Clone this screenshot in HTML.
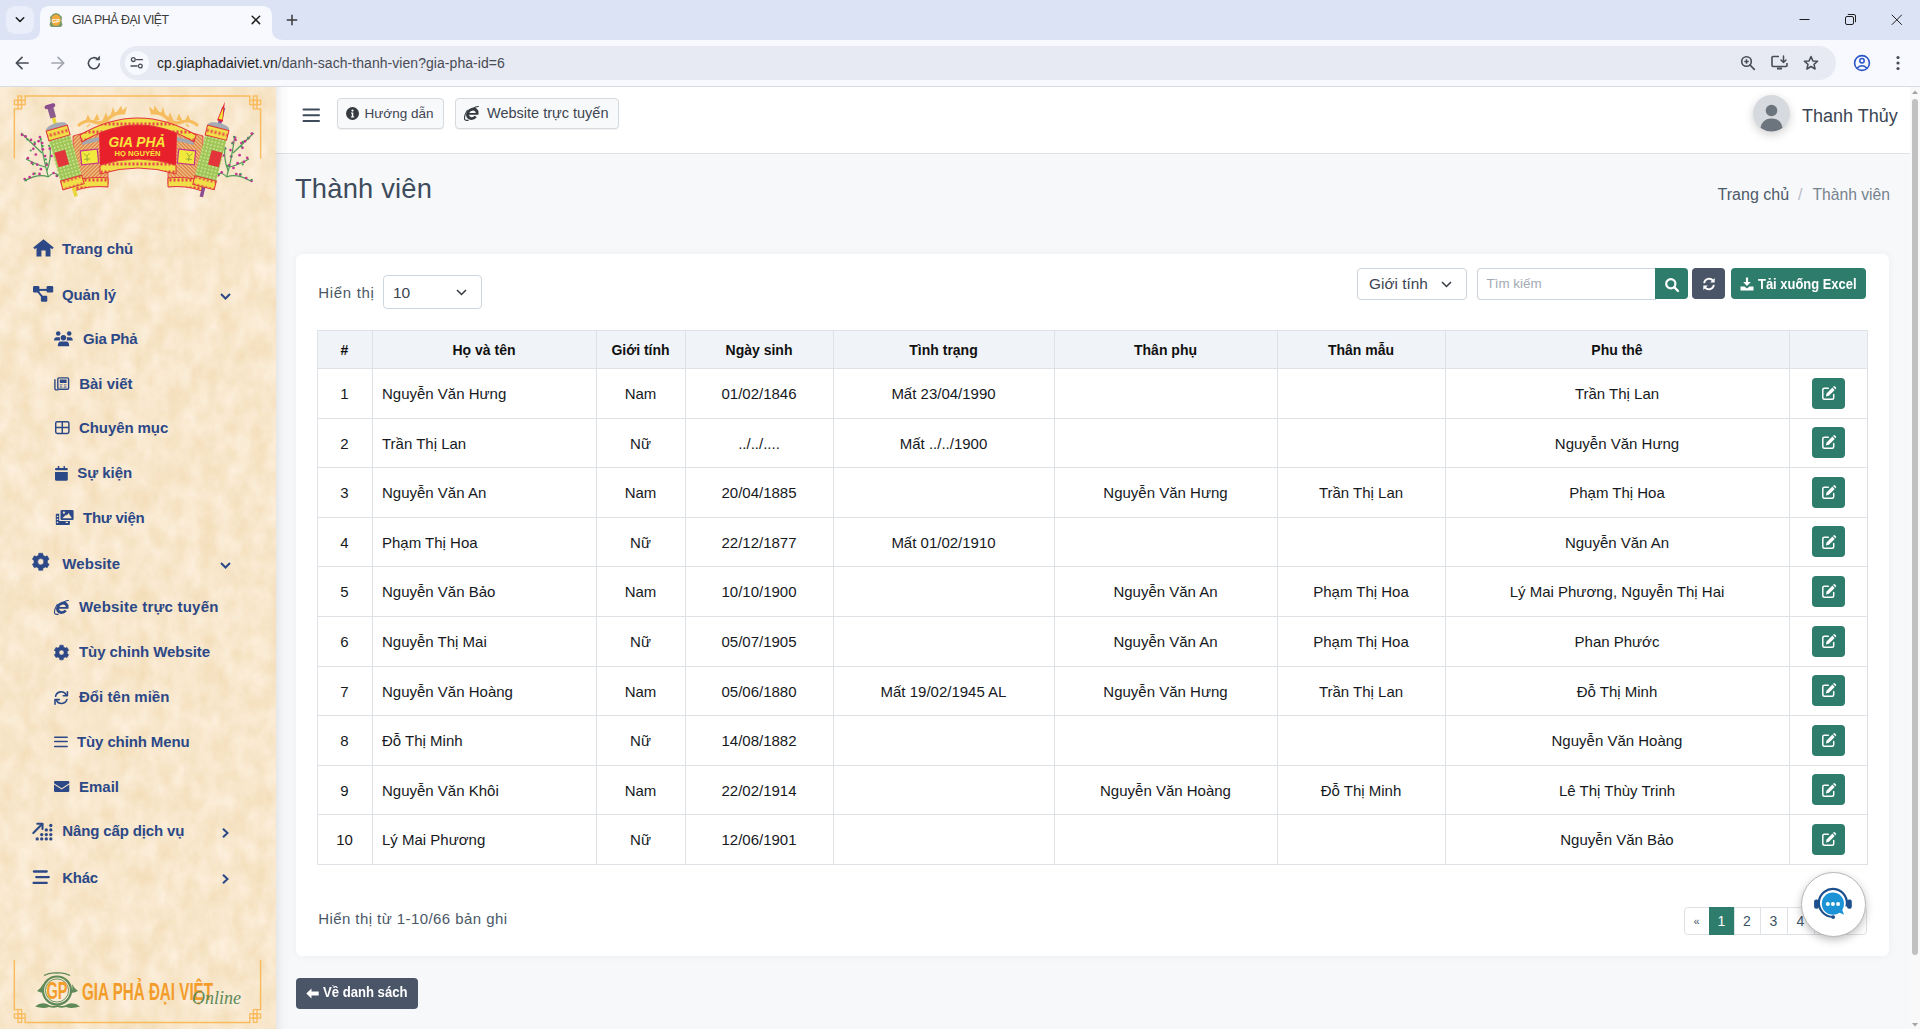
<!DOCTYPE html>
<html><head><meta charset="utf-8"><title>GIA PHẢ ĐẠI VIỆT</title>
<style>
*{box-sizing:border-box;margin:0;padding:0}
html,body{width:1920px;height:1029px;overflow:hidden;font-family:"Liberation Sans",sans-serif;background:#f7f8fa;position:relative}
.t{position:absolute;line-height:1;white-space:nowrap}
.a{position:absolute}
svg{position:absolute;overflow:visible}
#tabbar{position:absolute;left:0;top:0;width:1920px;height:40px;background:#dbe3f5}
#toolbar{position:absolute;left:0;top:40px;width:1920px;height:46px;background:#f8f9fe}
#tbline{position:absolute;left:0;top:86px;width:1920px;height:1px;background:#d7dbe6}

.cell{position:absolute;text-align:center;white-space:nowrap;font-size:15px;color:#16191d}
.hd{font-weight:bold;font-size:14px;color:#111}
</style></head>
<body>
<div id="tabbar"></div>
<div class="a" style="left:6px;top:6px;width:28px;height:28px;border-radius:9px;background:#e9eefa"></div>
<svg style="left:0;top:0" width="40" height="40"><path d="M16.3 17.8 L20 21.5 L23.7 17.8" fill="none" stroke="#1f1f1f" stroke-width="1.6" stroke-linecap="round" stroke-linejoin="round"/></svg>
<svg style="left:28px;top:0" width="256" height="41"><path d="M0 40 Q12 40 12 30 L12 16 Q12 6 22 6 L234 6 Q244 6 244 16 L244 30 Q244 40 256 40 Z" fill="#f8f9fe"/></svg>
<svg style="left:48px;top:12px" width="16" height="16"><path d="M3 15 L1.5 13 L2.5 9 L2 5 L5 2 L8 1 L11 2 L14 5 L13.5 9 L14.5 13 L13 15 Z" fill="#7d9a6b"/><ellipse cx="8" cy="8.2" rx="4.6" ry="5.6" fill="#f4a93a"/><text x="8" y="10.5" font-size="5.5" font-family="Liberation Sans" fill="#fff" text-anchor="middle" font-weight="bold">GP</text></svg>
<div class="t " style="left:72px;top:14.39px;font-size:12.3px;color:#3a3a3a;letter-spacing:-0.45px">GIA PHẢ ĐẠI VIỆT</div>
<svg style="left:250px;top:14px" width="12" height="12"><path d="M2.2 2.2 L9.6 9.6 M9.6 2.2 L2.2 9.6" stroke="#1f1f1f" stroke-width="1.5" stroke-linecap="round"/></svg>
<svg style="left:286px;top:14px" width="12" height="12"><path d="M6 1.3 V10.7 M1.3 6 H10.7" stroke="#3a3a3a" stroke-width="1.5" stroke-linecap="round"/></svg>
<svg style="left:1799px;top:14px" width="12" height="12"><path d="M0.5 5.5 H10.5" stroke="#1f1f1f" stroke-width="1"/></svg>
<svg style="left:1845px;top:14px" width="12" height="12"><rect x="0.5" y="2.5" width="8" height="8" rx="1.5" fill="none" stroke="#1f1f1f" stroke-width="1"/><path d="M2.8 0.5 H9 Q10.5 0.5 10.5 2 V8.2" fill="none" stroke="#1f1f1f" stroke-width="1"/></svg>
<svg style="left:1891px;top:14px" width="12" height="12"><path d="M0.8 0.8 L10.8 10.8 M10.8 0.8 L0.8 10.8" stroke="#1f1f1f" stroke-width="1"/></svg>
<div id="toolbar"></div><div id="tbline"></div>
<svg style="left:14px;top:55px" width="16" height="16"><path d="M14 8 H2.5 M8 2.3 L2.3 8 L8 13.7" fill="none" stroke="#474c55" stroke-width="1.7" stroke-linecap="round" stroke-linejoin="round"/></svg>
<svg style="left:50px;top:55px" width="16" height="16"><path d="M2 8 H13.5 M8 2.3 L13.7 8 L8 13.7" fill="none" stroke="#a3a6ad" stroke-width="1.7" stroke-linecap="round" stroke-linejoin="round"/></svg>
<svg style="left:86px;top:55px" width="16" height="16"><path d="M13.4 8.3 A5.5 5.5 0 1 1 11.9 4.4" fill="none" stroke="#474c55" stroke-width="1.6"/><path d="M9.2 5.3 L13.9 5.3 L13.9 0.6 Z" fill="#474c55"/></svg>
<div class="a" style="left:120px;top:46px;width:1716px;height:34px;border-radius:17px;background:#e7eaf3"></div>
<div class="a" style="left:125px;top:51px;width:24px;height:24px;border-radius:12px;background:#f8f9fe"></div>
<svg style="left:130px;top:56px" width="14" height="14"><circle cx="3.3" cy="3.6" r="1.9" fill="none" stroke="#474c55" stroke-width="1.3"/><path d="M6.5 3.6 H12.5 M1 10 H7" stroke="#474c55" stroke-width="1.3" stroke-linecap="round"/><circle cx="10.3" cy="10" r="1.9" fill="none" stroke="#474c55" stroke-width="1.3"/></svg>
<div class="t " style="left:157px;top:55.65px;font-size:14px;letter-spacing:0.05px"><span style="color:#1f1f1f">cp.giaphadaiviet.vn</span><span style="color:#474c55">/danh-sach-thanh-vien?gia-pha-id=6</span></div>
<svg style="left:1740px;top:55px" width="16" height="16"><circle cx="6.5" cy="6.5" r="4.8" fill="none" stroke="#474c55" stroke-width="1.6"/><path d="M4.3 6.5 H8.7 M6.5 4.3 V8.7" stroke="#474c55" stroke-width="1.5"/><path d="M10 10 L14.3 14.3" stroke="#474c55" stroke-width="1.7" stroke-linecap="round"/></svg>
<svg style="left:1771px;top:55px" width="18" height="16"><path d="M8 1.5 H2 Q1 1.5 1 2.5 V10.5 Q1 11.5 2 11.5 H15 Q16 11.5 16 10.5 V8" fill="none" stroke="#474c55" stroke-width="1.6"/><path d="M12.5 1 V7.5 M10 5 L12.5 7.5 L15 5" fill="none" stroke="#474c55" stroke-width="1.5" stroke-linecap="round" stroke-linejoin="round"/><rect x="6" y="12.5" width="5" height="2" fill="#474c55"/></svg>
<svg style="left:1803px;top:55px" width="16" height="16"><path d="M8 1.5 L9.9 5.9 L14.6 6.3 L11 9.4 L12.1 14 L8 11.5 L3.9 14 L5 9.4 L1.4 6.3 L6.1 5.9 Z" fill="none" stroke="#474c55" stroke-width="1.5" stroke-linejoin="round"/></svg>
<svg style="left:1853px;top:54px" width="18" height="18"><circle cx="9" cy="9" r="7.4" fill="none" stroke="#2a55c9" stroke-width="1.6"/><circle cx="9" cy="6.8" r="2.2" fill="none" stroke="#2a55c9" stroke-width="1.5"/><path d="M4.2 14 Q9 9.6 13.8 14" fill="none" stroke="#2a55c9" stroke-width="1.5"/></svg>
<svg style="left:1894px;top:55px" width="8" height="16"><circle cx="4" cy="2.5" r="1.6" fill="#474c55"/><circle cx="4" cy="8" r="1.6" fill="#474c55"/><circle cx="4" cy="13.5" r="1.6" fill="#474c55"/></svg>
<svg style="left:0;top:87px" width="276" height="942"><defs><filter id="pn" x="0" y="0" width="100%" height="100%" color-interpolation-filters="sRGB"><feTurbulence type="fractalNoise" baseFrequency="0.06 0.04" numOctaves="5" seed="11"/><feColorMatrix type="matrix" values="0 0 0 0 1  0 0 0 0 0.962  0 0 0 0 0.915  0.8 0 0 0 0.1"/></filter></defs><rect width="276" height="942" fill="#f1d8ad"/><rect width="276" height="942" filter="url(#pn)"/></svg>
<div class="a" style="left:0;top:87px;width:276px;height:942px">
<svg style="left:0;top:0" width="276" height="210"><path d="M24.5 9 H250.5 M14.35 21.25 V71.5 M260.6 21.25 V71.5" stroke="#f9bb5c" stroke-width="1.45"/><g transform="translate(19.75 15.45) scale(1 1)" fill="none" stroke="#f9bb5c" stroke-width="1.3"><rect x="-1.8" y="-6.45" width="3.6" height="4.3"/><rect x="-5.4" y="-2.15" width="3.6" height="4.3"/><rect x="-1.8" y="-2.15" width="3.6" height="4.3"/><rect x="1.8" y="-2.15" width="3.6" height="4.3"/><rect x="-1.8" y="2.15" width="3.6" height="4.3"/><path d="M5.4 -2.15 V-6.45 M-1.8 6.45 H-5.4"/></g><g transform="translate(255.2 15.45) scale(-1 1)" fill="none" stroke="#f9bb5c" stroke-width="1.3"><rect x="-1.8" y="-6.45" width="3.6" height="4.3"/><rect x="-5.4" y="-2.15" width="3.6" height="4.3"/><rect x="-1.8" y="-2.15" width="3.6" height="4.3"/><rect x="1.8" y="-2.15" width="3.6" height="4.3"/><rect x="-1.8" y="2.15" width="3.6" height="4.3"/><path d="M5.4 -2.15 V-6.45 M-1.8 6.45 H-5.4"/></g><path d="M48.4 90 Q43.6 74 40.4 50" fill="none" stroke="#4e9b55" stroke-width="1.2"/><path d="M48.4 90 Q38.8 86 24.4 94" fill="none" stroke="#4e9b55" stroke-width="1.2"/><path d="M42.0 66 Q35.6 60 21.2 46" fill="none" stroke="#4e9b55" stroke-width="1.2"/><path d="M45.2 80 Q37.2 78 26.0 72" fill="none" stroke="#4e9b55" stroke-width="1.2"/><path d="M48.4 90 Q53.2 84 58.0 88" fill="none" stroke="#4e9b55" stroke-width="1.2"/><path d="M46.8 84 Q51.6 72 50.0 60" fill="none" stroke="#4e9b55" stroke-width="1.2"/><circle cx="39.9" cy="50.1" r="1.35" fill="#c2368f"/><circle cx="38.6" cy="54.2" r="1.35" fill="#c2368f"/><circle cx="42.2" cy="56.0" r="1.35" fill="#c2368f"/><circle cx="21.9" cy="47.8" r="1.35" fill="#c2368f"/><circle cx="25.5" cy="49.4" r="1.35" fill="#c2368f"/><circle cx="31.0" cy="52.9" r="1.35" fill="#c2368f"/><circle cx="34.6" cy="56.9" r="1.35" fill="#c2368f"/><circle cx="27.9" cy="71.2" r="1.35" fill="#c2368f"/><circle cx="31.9" cy="75.9" r="1.35" fill="#c2368f"/><circle cx="37.2" cy="77.6" r="1.35" fill="#c2368f"/><circle cx="24.7" cy="92.0" r="1.35" fill="#c2368f"/><circle cx="29.7" cy="90.2" r="1.35" fill="#c2368f"/><circle cx="33.6" cy="86.9" r="1.35" fill="#c2368f"/><circle cx="39.5" cy="86.9" r="1.35" fill="#c2368f"/><circle cx="56.8" cy="88.9" r="1.35" fill="#c2368f"/><circle cx="53.6" cy="86.0" r="1.35" fill="#c2368f"/><circle cx="49.8" cy="61.7" r="1.35" fill="#c2368f"/><circle cx="51.5" cy="69.0" r="1.35" fill="#c2368f"/><circle cx="45.1" cy="69.0" r="1.35" fill="#c2368f"/><circle cx="42.9" cy="62.3" r="1.35" fill="#c2368f"/><circle cx="33.3" cy="61.8" r="1.35" fill="#c2368f"/><circle cx="35.8" cy="67.5" r="1.35" fill="#c2368f"/><circle cx="46.8" cy="77.7" r="1.35" fill="#c2368f"/><circle cx="40.9" cy="82.2" r="1.35" fill="#c2368f"/><circle cx="40.7" cy="52.0" r="1.1" fill="#3f9b55"/><circle cx="42.7" cy="59.1" r="1.1" fill="#3f9b55"/><circle cx="27.4" cy="52.5" r="1.1" fill="#3f9b55"/><circle cx="34.7" cy="55.3" r="1.1" fill="#3f9b55"/><circle cx="33.0" cy="77.3" r="1.1" fill="#3f9b55"/><circle cx="26.0" cy="93.3" r="1.1" fill="#3f9b55"/><circle cx="34.9" cy="86.6" r="1.1" fill="#3f9b55"/><circle cx="57.7" cy="88.4" r="1.1" fill="#3f9b55"/><circle cx="49.1" cy="58.8" r="1.1" fill="#3f9b55"/><circle cx="45.8" cy="72.4" r="1.1" fill="#3f9b55"/><circle cx="30.8" cy="63.5" r="1.1" fill="#3f9b55"/><circle cx="46.4" cy="76.3" r="1.1" fill="#3f9b55"/><path d="M226.6 90 Q231.4 74 234.6 50" fill="none" stroke="#4e9b55" stroke-width="1.2"/><path d="M226.6 90 Q236.2 86 250.6 94" fill="none" stroke="#4e9b55" stroke-width="1.2"/><path d="M233.0 66 Q239.4 60 253.8 46" fill="none" stroke="#4e9b55" stroke-width="1.2"/><path d="M229.8 80 Q237.8 78 249.0 72" fill="none" stroke="#4e9b55" stroke-width="1.2"/><path d="M226.6 90 Q221.8 84 217.0 88" fill="none" stroke="#4e9b55" stroke-width="1.2"/><path d="M228.2 84 Q223.4 72 225.0 60" fill="none" stroke="#4e9b55" stroke-width="1.2"/><circle cx="235.0" cy="50.6" r="1.35" fill="#c2368f"/><circle cx="235.5" cy="52.9" r="1.35" fill="#c2368f"/><circle cx="232.8" cy="55.9" r="1.35" fill="#c2368f"/><circle cx="251.8" cy="46.6" r="1.35" fill="#c2368f"/><circle cx="248.3" cy="51.2" r="1.35" fill="#c2368f"/><circle cx="245.0" cy="54.2" r="1.35" fill="#c2368f"/><circle cx="241.4" cy="56.0" r="1.35" fill="#c2368f"/><circle cx="247.2" cy="70.9" r="1.35" fill="#c2368f"/><circle cx="244.0" cy="74.8" r="1.35" fill="#c2368f"/><circle cx="237.6" cy="76.2" r="1.35" fill="#c2368f"/><circle cx="251.5" cy="93.9" r="1.35" fill="#c2368f"/><circle cx="246.2" cy="91.1" r="1.35" fill="#c2368f"/><circle cx="240.2" cy="87.7" r="1.35" fill="#c2368f"/><circle cx="236.3" cy="87.0" r="1.35" fill="#c2368f"/><circle cx="218.3" cy="88.2" r="1.35" fill="#c2368f"/><circle cx="221.7" cy="85.3" r="1.35" fill="#c2368f"/><circle cx="224.2" cy="61.0" r="1.35" fill="#c2368f"/><circle cx="223.5" cy="68.5" r="1.35" fill="#c2368f"/><circle cx="231.1" cy="69.5" r="1.35" fill="#c2368f"/><circle cx="230.5" cy="63.1" r="1.35" fill="#c2368f"/><circle cx="242.5" cy="60.8" r="1.35" fill="#c2368f"/><circle cx="239.6" cy="68.2" r="1.35" fill="#c2368f"/><circle cx="229.1" cy="78.3" r="1.35" fill="#c2368f"/><circle cx="233.5" cy="80.9" r="1.35" fill="#c2368f"/><circle cx="234.1" cy="49.8" r="1.1" fill="#3f9b55"/><circle cx="232.3" cy="56.3" r="1.1" fill="#3f9b55"/><circle cx="248.2" cy="51.2" r="1.1" fill="#3f9b55"/><circle cx="242.9" cy="54.8" r="1.1" fill="#3f9b55"/><circle cx="242.7" cy="77.3" r="1.1" fill="#3f9b55"/><circle cx="251.6" cy="92.8" r="1.1" fill="#3f9b55"/><circle cx="240.6" cy="87.1" r="1.1" fill="#3f9b55"/><circle cx="219.1" cy="87.1" r="1.1" fill="#3f9b55"/><circle cx="225.5" cy="61.5" r="1.1" fill="#3f9b55"/><circle cx="231.4" cy="69.4" r="1.1" fill="#3f9b55"/><circle cx="241.5" cy="59.6" r="1.1" fill="#3f9b55"/><circle cx="227.9" cy="79.2" r="1.1" fill="#3f9b55"/><defs><pattern id="hatch" width="2.6" height="2.6" patternUnits="userSpaceOnUse" patternTransform="rotate(45)"><rect width="2.6" height="2.6" fill="#f0c48e"/><rect width="1.3" height="2.6" fill="#dc7d3a"/></pattern><pattern id="band" width="4" height="8" patternUnits="userSpaceOnUse"><rect width="4" height="8" fill="#f1df48"/><rect x="0.5" y="2.5" width="2" height="3" fill="#e5454a"/></pattern><pattern id="greenp" width="3.5" height="3.5" patternUnits="userSpaceOnUse"><rect width="3.5" height="3.5" fill="#9fc655"/><circle cx="1.75" cy="1.75" r="0.9" fill="#d6e6a6"/></pattern></defs><g transform="translate(0,-87)" opacity="0.8"><path d="M79 125 Q86 119 94 122 Q102 125 109 118 Q115 112 124 113" fill="none" stroke="#f6b445" stroke-width="3.2" stroke-linecap="round"/><path d="M86 121 l2 -5 l2 4 M94 121 l3 -6 l2 5 M103 121 l3 -7 l2 6 M111 116 l2 -7 l2 6 M117 113 l4 -6 l1 5 M121 112 l5 -4 l-1 4" fill="#f6b445" stroke="#f6b445" stroke-width="1.2"/><path d="M90 124 l-3 3 M100 124 l-2 4 M108 121 l1 4" stroke="#f6b445" stroke-width="1.4"/></g><g transform="translate(276,-87) scale(-1 1)" opacity="0.8"><path d="M79 125 Q86 119 94 122 Q102 125 109 118 Q115 112 124 113" fill="none" stroke="#f6b445" stroke-width="3.2" stroke-linecap="round"/><path d="M86 121 l2 -5 l2 4 M94 121 l3 -6 l2 5 M103 121 l3 -7 l2 6 M111 116 l2 -7 l2 6 M117 113 l4 -6 l1 5 M121 112 l5 -4 l-1 4" fill="#f6b445" stroke="#f6b445" stroke-width="1.2"/><path d="M90 124 l-3 3 M100 124 l-2 4 M108 121 l1 4" stroke="#f6b445" stroke-width="1.4"/></g><g transform="translate(0,-87)"><g><path d="M73 136 Q90 130 108 132 L108 184 Q90 182 74 188 Z" fill="url(#hatch)" stroke="#e2343a" stroke-width="0.8"/><path d="M73 181 Q90 176 108 178 L108 187 Q90 185 74 191 Z" fill="url(#band)" stroke="#e2343a" stroke-width="1"/><path d="M82 141 L99 137 L99 141 L82 145 Z" fill="#a3a7ae"/><rect x="81" y="150" width="17" height="14" fill="#f3e83c" stroke="#c2338f" stroke-width="1.2" transform="rotate(-6 89 157)"/><path d="M84 153 l3 3 l3 -3 m-3 3 v5 m-3 -2 h6" stroke="#8aa23a" stroke-width="0.8" fill="none" transform="rotate(-6 89 157)"/></g><g transform="translate(276 0) scale(-1 1)"><path d="M73 136 Q90 130 108 132 L108 184 Q90 182 74 188 Z" fill="url(#hatch)" stroke="#e2343a" stroke-width="0.8"/><path d="M73 181 Q90 176 108 178 L108 187 Q90 185 74 191 Z" fill="url(#band)" stroke="#e2343a" stroke-width="1"/><path d="M82 141 L99 137 L99 141 L82 145 Z" fill="#a3a7ae"/><rect x="81" y="150" width="17" height="14" fill="#f3e83c" stroke="#c2338f" stroke-width="1.2" transform="rotate(-6 89 157)"/><path d="M84 153 l3 3 l3 -3 m-3 3 v5 m-3 -2 h6" stroke="#8aa23a" stroke-width="0.8" fill="none" transform="rotate(-6 89 157)"/></g><path d="M99 132 Q138 106 177 132 L176 166 Q138 154 100 166 Z" fill="#e8202c"/><path d="M80 135 Q138 101 196 135 L194 142 Q138 108 82 142 Z" fill="url(#band)" stroke="#e2343a" stroke-width="1.1"/><path d="M100 165 Q138 153 176 165 L176 174 Q138 162 100 174 Z" fill="url(#band)" stroke="#e2343a" stroke-width="1"/><text x="108.5" y="146.5" font-family="Liberation Sans" font-weight="bold" font-size="15" fill="#f8e53a" font-style="italic" textLength="57" lengthAdjust="spacingAndGlyphs">GIA PHẢ</text><text x="114.5" y="156" font-family="Liberation Sans" font-weight="bold" font-size="8" fill="#f8e53a" textLength="46" lengthAdjust="spacingAndGlyphs">HỌ NGUYỄN</text><g transform="rotate(-16 65 157)"><rect x="63" y="106" width="3.5" height="92" fill="#e8d63a"/><rect x="61.5" y="104" width="6" height="12" fill="#8c5c8f"/><rect x="59" y="102" width="11" height="4" rx="2" fill="#8c4c90"/><rect x="54" y="126" width="22" height="62" rx="3" fill="url(#greenp)"/><ellipse cx="65" cy="126" rx="11" ry="4" fill="#a6abb3"/><rect x="54" y="127" width="22" height="10" fill="url(#band)" stroke="#e2343a" stroke-width="1"/><rect x="54" y="179" width="22" height="9" fill="url(#band)" stroke="#e2343a" stroke-width="1"/><rect x="56" y="150" width="11" height="15" fill="#e2343a"/></g><g transform="rotate(14 211 157)"><rect x="209.5" y="106" width="3.5" height="92" fill="#8c4c90"/><path d="M208 120 L211 100 L214 120 Z" fill="#e8202c"/><path d="M209 118 L211 106 L213 118 Z" fill="#f2e63a"/><rect x="200" y="126" width="22" height="62" rx="3" fill="url(#greenp)"/><ellipse cx="211" cy="126" rx="11" ry="4" fill="#a6abb3"/><rect x="200" y="127" width="22" height="10" fill="url(#band)" stroke="#e2343a" stroke-width="1"/><rect x="200" y="179" width="22" height="9" fill="url(#band)" stroke="#e2343a" stroke-width="1"/><rect x="210" y="150" width="11" height="15" fill="#e2343a"/></g></g></svg>
<svg style="left:0;top:860px" width="276" height="82"><path d="M14.35 13 V63.2 M260.6 13 V63.2 M24.5 75.45 H250.5" stroke="#f9bb5c" stroke-width="1.45"/><g transform="translate(19.75 69) scale(1 -1)" fill="none" stroke="#f9bb5c" stroke-width="1.3"><rect x="-1.8" y="-6.45" width="3.6" height="4.3"/><rect x="-5.4" y="-2.15" width="3.6" height="4.3"/><rect x="-1.8" y="-2.15" width="3.6" height="4.3"/><rect x="1.8" y="-2.15" width="3.6" height="4.3"/><rect x="-1.8" y="2.15" width="3.6" height="4.3"/><path d="M5.4 -2.15 V-6.45 M-1.8 6.45 H-5.4"/></g><g transform="translate(255.2 69) scale(-1 -1)" fill="none" stroke="#f9bb5c" stroke-width="1.3"><rect x="-1.8" y="-6.45" width="3.6" height="4.3"/><rect x="-5.4" y="-2.15" width="3.6" height="4.3"/><rect x="-1.8" y="-2.15" width="3.6" height="4.3"/><rect x="1.8" y="-2.15" width="3.6" height="4.3"/><rect x="-1.8" y="2.15" width="3.6" height="4.3"/><path d="M5.4 -2.15 V-6.45 M-1.8 6.45 H-5.4"/></g><path d="M35 59.5 Q41 54.5 47 57 Q52 60.5 57.5 58 Q63 60.5 68 57 Q74 54.5 80 59.5 Q72 62 66 60 Q61.5 61.5 57.5 60 Q53.5 61.5 49 60 Q43 62 35 59.5 Z" fill="#5f8a58"/><path d="M37 44 Q41 41 43 37 Q42 43 44 46 Q41 46 37 44 Z M78 44 Q74 41 72 37 Q73 43 71 46 Q74 46 78 44 Z" fill="#5f8a58"/><path d="M44 28.5 Q50 25 57 26 Q64 25 70 28.5" fill="none" stroke="#5f8a58" stroke-width="1.3"/><circle cx="57" cy="43.5" r="14" fill="none" stroke="#5f8a58" stroke-width="2.2"/><circle cx="57" cy="43.5" r="11.6" fill="none" stroke="#5f8a58" stroke-width="0.9"/><text x="46.5" y="52.3" font-family="Liberation Sans" font-weight="bold" font-size="23" fill="#f39c2a" textLength="21" lengthAdjust="spacingAndGlyphs">GP</text><text x="82" y="53.3" font-family="Liberation Sans" font-weight="bold" font-size="24" fill="#f39c2a" textLength="131" lengthAdjust="spacingAndGlyphs">GIA PHẢ ĐẠI VIỆT</text><text x="192" y="57" font-family="Liberation Serif" font-style="italic" font-size="19" fill="#5e8a5a" textLength="49" lengthAdjust="spacingAndGlyphs">Online</text></svg>
</div>
<svg style="left:32.6px;top:239px" width="21" height="18" viewBox="0 0 21 18"><path d="M10.5 0.3 L20.7 8.6 L19.3 10.2 L17.5 8.8 V17.6 H12.6 V11.6 H8.4 V17.6 H3.5 V8.8 L1.7 10.2 L0.3 8.6 Z" fill="#2c4887"/></svg>
<div class="t " style="left:62px;top:240.80px;font-size:15px;font-weight:bold;color:#2c4887;letter-spacing:-0.061px">Trang chủ</div>
<svg style="left:32.5px;top:286.1px" width="21" height="17" viewBox="0 0 21 17"><rect x="0" y="0" width="6.4" height="6.6" rx="1.3" fill="#2c4887"/><rect x="13.6" y="0" width="6.6" height="6.6" rx="1.3" fill="#2c4887"/><rect x="7.9" y="9.7" width="6.4" height="6.1" rx="1.2" fill="#2c4887"/><path d="M5 3.9 H15" stroke="#2c4887" stroke-width="2"/><path d="M5 5.5 L9.2 10.8" stroke="#2c4887" stroke-width="1.9"/></svg>
<div class="t " style="left:62px;top:286.50px;font-size:15px;font-weight:bold;color:#2c4887;letter-spacing:-0.17px">Quản lý</div>
<svg style="left:54.4px;top:330.7px" width="19" height="16" viewBox="0 0 19 16"><circle cx="4.2" cy="2.4" r="2.25" fill="#2c4887"/><circle cx="15.2" cy="2.4" r="2.25" fill="#2c4887"/><circle cx="9.4" cy="6.8" r="2.75" fill="#2c4887"/><path d="M0 9.4 Q0.3 6.3 2.6 6.3 H5.5 Q5.9 6.3 6.1 6.6 Q5.6 7.9 6.1 9.4 Z" fill="#2c4887"/><path d="M18.8 9.4 Q18.5 6.3 16.2 6.3 H13.3 Q12.9 6.3 12.7 6.6 Q13.2 7.9 12.7 9.4 Z" fill="#2c4887"/><path d="M3.8 15.3 Q3.8 10.4 6.6 10.4 H12.3 Q15.2 10.4 15.2 15.3 Z" fill="#2c4887"/></svg>
<div class="t " style="left:83px;top:330.50px;font-size:15px;font-weight:bold;color:#2c4887;letter-spacing:-0.21px">Gia Phả</div>
<svg style="left:54.3px;top:376.7px" width="16" height="14" viewBox="0 0 16 14"><path d="M0.9 2.3 V11.4 Q0.9 12.9 2.4 12.9 H4.5" fill="none" stroke="#2c4887" stroke-width="1.4"/><rect x="3.8" y="0.9" width="10.8" height="11.4" rx="1.3" fill="none" stroke="#2c4887" stroke-width="1.4"/><rect x="5.8" y="2.6" width="6.8" height="3.4" rx="0.5" fill="#2c4887"/><rect x="5.6" y="7.4" width="2.9" height="0.9" rx="0.4" fill="#2c4887"/><rect x="9.7" y="7.4" width="2.9" height="0.9" rx="0.4" fill="#2c4887"/><rect x="5.6" y="9.5" width="2.9" height="1.1" rx="0.4" fill="#2c4887"/><rect x="9.7" y="9.5" width="2.9" height="1.1" rx="0.4" fill="#2c4887"/></svg>
<div class="t " style="left:79.2px;top:375.50px;font-size:15px;font-weight:bold;color:#2c4887;letter-spacing:-0.009px">Bài viết</div>
<svg style="left:54.8px;top:420.9px" width="15" height="14" viewBox="0 0 15 14"><rect x="0.7" y="0.7" width="13.2" height="11.7" rx="1.6" fill="none" stroke="#2c4887" stroke-width="1.45"/><path d="M7.3 0.7 V12.4 M0.7 6.5 H13.9" stroke="#2c4887" stroke-width="1.45"/></svg>
<div class="t " style="left:79px;top:419.50px;font-size:15px;font-weight:bold;color:#2c4887;letter-spacing:-0.08px">Chuyên mục</div>
<svg style="left:54.7px;top:466px" width="13" height="15" viewBox="0 0 13 15"><rect x="2.8" y="0" width="1.5" height="3" rx="0.6" fill="#2c4887"/><rect x="8.5" y="0" width="1.5" height="3" rx="0.6" fill="#2c4887"/><rect x="0" y="2.1" width="12.8" height="2.2" rx="1" fill="#2c4887"/><path d="M0 6 H12.8 V13.6 Q12.8 14.7 11.7 14.7 H1.1 Q0 14.7 0 13.6 Z" fill="#2c4887"/></svg>
<div class="t " style="left:77.2px;top:465.30px;font-size:15px;font-weight:bold;color:#2c4887;letter-spacing:-0.01px">Sự kiện</div>
<svg style="left:54.5px;top:509.9px" width="19" height="15" viewBox="0 0 19 15"><path d="M6.7 0 H17.4 Q18.6 0 18.6 1.2 V8.8 Q18.6 10 17.4 10 H6.7 Q5.5 10 5.5 8.8 V1.2 Q5.5 0 6.7 0 Z M8.9 1.6 A1.1 1.1 0 1 0 8.9 3.8 A1.1 1.1 0 1 0 8.9 1.6 Z M7.4 8.2 L11 4.8 L11.9 5.5 L13.5 2.9 L16.9 8.2 Z" fill="#2c4887" fill-rule="evenodd"/><path d="M0.8 4.6 Q0.8 3.8 1.6 3.8 H4.2 V11.1 H10.3 V11.1 H14.9 V13.9 Q14.9 15 13.8 15 H1.9 Q0.8 15 0.8 13.9 Z M1.8 5.7 V7 H3.2 V5.7 Z M1.8 8.8 V10 H3.2 V8.8 Z M1.8 11.7 V13 H3.2 V11.7 Z M10.7 11.7 V13 H12.9 V11.7 Z" fill="#2c4887" fill-rule="evenodd"/></svg>
<div class="t " style="left:83px;top:509.50px;font-size:15px;font-weight:bold;color:#2c4887;letter-spacing:-0.24px">Thư viện</div>
<svg style="left:32.3px;top:553px" width="17.5" height="17.5"><path d="M6.53 2.30 L6.78 0.22 L10.72 0.22 L10.97 2.30 L13.23 3.60 L15.15 2.78 L17.12 6.19 L15.45 7.45 L15.45 10.05 L17.12 11.31 L15.15 14.72 L13.23 13.90 L10.97 15.20 L10.72 17.28 L6.78 17.28 L6.53 15.20 L4.27 13.90 L2.35 14.72 L0.38 11.31 L2.05 10.05 L2.05 7.45 L0.38 6.19 L2.35 2.78 L4.27 3.60 Z M11.72 8.75 A2.975 2.975 0 1 0 5.78 8.75 A2.975 2.975 0 1 0 11.72 8.75 Z" fill="#2c4887" fill-rule="evenodd" stroke="#2c4887" stroke-width="0.6" stroke-linejoin="round"/></svg>
<div class="t " style="left:62.3px;top:555.60px;font-size:15px;font-weight:bold;color:#2c4887;letter-spacing:0.075px">Website</div>
<svg style="left:54.4px;top:600px" width="16" height="15" viewBox="0 0 16 15"><g transform="translate(8 7.5) skewX(-10) translate(-8 -7.5)"><path d="M14.6 8.8 L14.6 7.8 A6.2 6.2 0 1 0 13.5 11.36 L11.2 9.75 A3.4 3.4 0 0 1 5.15 8.8 Z M5.1 7 A3.4 3.4 0 0 1 11.7 7 Z" fill="#2c4887" fill-rule="evenodd"/></g><path d="M9.6 2.1 Q12 0.2 14.8 0.5" fill="none" stroke="#2c4887" stroke-width="1.1"/><path d="M3.6 4 Q0 9.5 0.5 13.2 Q1 14.8 4.6 14.2" fill="none" stroke="#2c4887" stroke-width="1.1"/></svg>
<div class="t " style="left:79px;top:599.30px;font-size:15px;font-weight:bold;color:#2c4887;letter-spacing:0.222px">Website trực tuyến</div>
<svg style="left:54.3px;top:645px" width="15" height="15"><path d="M5.60 1.97 L5.81 0.19 L9.19 0.19 L9.40 1.97 L11.34 3.08 L12.99 2.39 L14.67 5.31 L13.24 6.38 L13.24 8.62 L14.67 9.69 L12.99 12.61 L11.34 11.92 L9.40 13.03 L9.19 14.81 L5.81 14.81 L5.60 13.03 L3.66 11.92 L2.01 12.61 L0.33 9.69 L1.76 8.62 L1.76 6.38 L0.33 5.31 L2.01 2.39 L3.66 3.08 Z M10.05 7.50 A2.5500000000000003 2.5500000000000003 0 1 0 4.95 7.50 A2.5500000000000003 2.5500000000000003 0 1 0 10.05 7.50 Z" fill="#2c4887" fill-rule="evenodd" stroke="#2c4887" stroke-width="0.6" stroke-linejoin="round"/></svg>
<div class="t " style="left:79px;top:643.80px;font-size:15px;font-weight:bold;color:#2c4887;letter-spacing:-0.078px">Tùy chỉnh Website</div>
<svg style="left:54.2px;top:690.5px" width="15" height="14" viewBox="0 0 15 14"><path d="M1.6 5.2 A5.7 5.7 0 0 1 12.2 3.9" fill="none" stroke="#2c4887" stroke-width="1.6" stroke-linecap="round"/><path d="M13.4 0.8 V4.8 H9.3" fill="none" stroke="#2c4887" stroke-width="1.6" stroke-linecap="round" stroke-linejoin="round"/><path d="M12.9 8.5 A5.7 5.7 0 0 1 2.4 9.4" fill="none" stroke="#2c4887" stroke-width="1.6" stroke-linecap="round"/><path d="M1 13.2 V8.6 H5.3" fill="none" stroke="#2c4887" stroke-width="1.6" stroke-linecap="round" stroke-linejoin="round"/></svg>
<div class="t " style="left:79px;top:689.30px;font-size:15px;font-weight:bold;color:#2c4887;letter-spacing:0.035px">Đổi tên miền</div>
<svg style="left:54.0px;top:735.6px" width="14" height="12" viewBox="0 0 14 12"><path d="M0.7 1.2 H13.2 M0.7 5.6 H13.2 M0.7 10.4 H13.2" stroke="#2c4887" stroke-width="1.5" stroke-linecap="round"/></svg>
<div class="t " style="left:77px;top:733.80px;font-size:15px;font-weight:bold;color:#2c4887;letter-spacing:-0.113px">Tùy chỉnh Menu</div>
<svg style="left:54.4px;top:781px" width="16" height="11" viewBox="0 0 16 11"><path d="M1.2 0 H14.1 Q15.3 0 15.3 1.2 V2.2 L7.65 7.2 L0 2.2 V1.2 Q0 0 1.2 0 Z" fill="#2c4887"/><path d="M0 3.4 L7.65 8.4 L15.3 3.4 V9.7 Q15.3 10.9 14.1 10.9 H1.2 Q0 10.9 0 9.7 Z" fill="#2c4887"/></svg>
<div class="t " style="left:79px;top:778.60px;font-size:15px;font-weight:bold;color:#2c4887;letter-spacing:-0.008px">Email</div>
<svg style="left:32.2px;top:821.5px" width="21" height="19" viewBox="0 0 21 19"><circle cx="18.8" cy="3.5" r="1.65" fill="#2c4887"/><circle cx="14.3" cy="7.9" r="1.65" fill="#2c4887"/><circle cx="18.8" cy="7.9" r="1.65" fill="#2c4887"/><circle cx="9.7" cy="12.6" r="1.65" fill="#2c4887"/><circle cx="14.3" cy="12.6" r="1.65" fill="#2c4887"/><circle cx="18.8" cy="12.6" r="1.65" fill="#2c4887"/><circle cx="5.2" cy="16.9" r="1.65" fill="#2c4887"/><circle cx="9.7" cy="16.9" r="1.65" fill="#2c4887"/><circle cx="14.3" cy="16.9" r="1.65" fill="#2c4887"/><circle cx="18.8" cy="16.9" r="1.65" fill="#2c4887"/><path d="M1.3 10.9 L10.2 2" stroke="#2c4887" stroke-width="2.1" stroke-linecap="round"/><path d="M5.3 1.7 H10.5 V7" fill="none" stroke="#2c4887" stroke-width="2.1" stroke-linecap="round" stroke-linejoin="round"/></svg>
<div class="t " style="left:62.3px;top:823.30px;font-size:15px;font-weight:bold;color:#2c4887;letter-spacing:-0.133px">Nâng cấp dịch vụ</div>
<svg style="left:32.2px;top:869px" width="19" height="16" viewBox="0 0 19 16"><path d="M1.9 2.5 H14.7 M4.2 8.1 H16.8 M1.6 13.9 H14.7" stroke="#2c4887" stroke-width="2.3" stroke-linecap="round"/></svg>
<div class="t " style="left:62.3px;top:869.60px;font-size:15px;font-weight:bold;color:#2c4887;letter-spacing:-0.33px">Khác</div>
<svg style="left:219.5px;top:293px" width="11" height="7" viewBox="0 0 11 7"><path d="M1 1 L5.5 5.5 L10 1" fill="none" stroke="#2c4887" stroke-width="2"/></svg>
<svg style="left:219.5px;top:562px" width="11" height="7" viewBox="0 0 11 7"><path d="M1 1 L5.5 5.5 L10 1" fill="none" stroke="#2c4887" stroke-width="2"/></svg>
<svg style="left:221.5px;top:827.5px" width="7" height="10" viewBox="0 0 7 10"><path d="M1 0.8 L5.5 5 L1 9.2" fill="none" stroke="#2c4887" stroke-width="2"/></svg>
<svg style="left:221.5px;top:873.5px" width="7" height="10" viewBox="0 0 7 10"><path d="M1 0.8 L5.5 5 L1 9.2" fill="none" stroke="#2c4887" stroke-width="2"/></svg>
<div class="a" style="left:276px;top:87px;width:1634px;height:67px;background:#fff;border-bottom:1px solid #dfe3e8"></div>
<svg style="left:303px;top:108px" width="17" height="15"><path d="M0.5 1.5 H16 M0.5 7.3 H16 M0.5 13.1 H16" stroke="#3d4b5c" stroke-width="2" stroke-linecap="round"/></svg>
<div class="a" style="left:337px;top:98px;width:107px;height:31px;border:1px solid #d6dadf;border-radius:4px;background:#f8f9fa;box-shadow:0 1px 1px rgba(0,0,0,0.06)"></div>
<svg style="left:346px;top:106.5px" width="13" height="13"><circle cx="6.5" cy="6.5" r="6.5" fill="#343a40"/><circle cx="6.5" cy="3.6" r="1.1" fill="#fff"/><path d="M5 5.6 H7.3 V9.6 H8.2 V10.6 H4.9 V9.6 H5.8 V6.5 H5 Z" fill="#fff"/></svg>
<div class="t " style="left:364.5px;top:106.87px;font-size:13.5px;color:#3d4652">Hướng dẫn</div>
<div class="a" style="left:455px;top:98px;width:164px;height:31px;border:1px solid #d6dadf;border-radius:4px;background:#f8f9fa;box-shadow:0 1px 1px rgba(0,0,0,0.06)"></div>
<svg style="left:463.5px;top:105.5px" width="16" height="15" viewBox="0 0 16 15"><g transform="translate(8 7.5) skewX(-10) translate(-8 -7.5)"><path d="M14.6 8.8 L14.6 7.8 A6.2 6.2 0 1 0 13.5 11.36 L11.2 9.75 A3.4 3.4 0 0 1 5.15 8.8 Z M5.1 7 A3.4 3.4 0 0 1 11.7 7 Z" fill="#343a40" fill-rule="evenodd"/></g><path d="M9.6 2.1 Q12 0.2 14.8 0.5" fill="none" stroke="#343a40" stroke-width="1.1"/><path d="M3.6 4 Q0 9.5 0.5 13.2 Q1 14.8 4.6 14.2" fill="none" stroke="#343a40" stroke-width="1.1"/></svg>
<div class="t " style="left:487px;top:106.03px;font-size:14.5px;color:#3d4652">Website trực tuyến</div>
<div class="a" style="left:1753px;top:95px;width:37px;height:37px;border-radius:50%;background:#d6d9de;box-shadow:0 3px 10px rgba(0,0,0,0.18);overflow:hidden"><svg style="left:0;top:0" width="37" height="37"><circle cx="18.5" cy="15.5" r="5.8" fill="#6c757d"/><path d="M7.5 33 Q9 23.5 18.5 23.5 Q28 23.5 29.5 33 Q24 36.5 18.5 36.5 Q13 36.5 7.5 33 Z" fill="#6c757d"/></svg></div>
<div class="t " style="left:1802px;top:106.76px;font-size:18px;color:#3a4553">Thanh Thủy</div>
<div class="t " style="left:295px;top:174.89px;font-size:27.3px;color:#3d4b5c;letter-spacing:0.2px">Thành viên</div>
<div class="t " style="left:1717.6px;top:186.66px;font-size:16px;color:#4d5a69">Trang chủ</div>
<div class="t " style="left:1798px;top:186.66px;font-size:16px;color:#b5bcc5">/</div>
<div class="t " style="left:1812.4px;top:186.91px;font-size:15.7px;color:#76828e">Thành viên</div>
<div class="a" style="left:296px;top:254px;width:1593px;height:701.5px;background:#fff;border-radius:6px;box-shadow:0 0 8px rgba(0,0,0,0.045)"></div>
<div class="t " style="left:318.2px;top:285.10px;font-size:15px;color:#4a5866;letter-spacing:0.7px">Hiển thị</div>
<div class="a" style="left:383px;top:275px;width:99px;height:34px;border:1px solid #cfd5dc;border-radius:4px;background:#fff"></div>
<div class="t " style="left:393px;top:284.88px;font-size:15.5px;color:#3b4450">10</div>
<svg style="left:456px;top:289px" width="11" height="7"><path d="M1 1 L5.5 5.5 L10 1" fill="none" stroke="#343a40" stroke-width="1.5"/></svg>
<div class="a" style="left:1357px;top:268px;width:110px;height:32px;border:1px solid #cfd5dc;border-radius:4px;background:#fff"></div>
<div class="t " style="left:1369px;top:276.36px;font-size:15.4px;color:#3b4450">Giới tính</div>
<svg style="left:1441px;top:281px" width="11" height="7"><path d="M1 1 L5.5 5.5 L10 1" fill="none" stroke="#343a40" stroke-width="1.5"/></svg>
<div class="a" style="left:1477px;top:268px;width:179px;height:32px;border:1px solid #cfd5dc;border-right:none;border-radius:4px 0 0 4px;background:#fff"></div>
<div class="t " style="left:1486.6px;top:277.16px;font-size:13.4px;color:#a3aab3">Tìm kiếm</div>
<div class="a" style="left:1655px;top:268px;width:33px;height:31px;border-radius:0 4px 4px 0;background:#2e7c6b"></div>
<svg style="left:1664.5px;top:277.5px" width="14" height="14"><circle cx="5.8" cy="5.8" r="4.6" fill="none" stroke="#fff" stroke-width="2.2"/><path d="M9.2 9.2 L13 13" stroke="#fff" stroke-width="2.4" stroke-linecap="round"/></svg>
<div class="a" style="left:1692px;top:268px;width:33px;height:31px;border-radius:4px;background:#4a5568"></div>
<svg style="left:1701.5px;top:277px" width="14" height="14" viewBox="0 0 15 14"><path d="M2.3 6 A5.4 5.4 0 0 1 11.8 3.3" fill="none" stroke="#fff" stroke-width="2"/><path d="M13.6 0.6 V5.4 H8.8 Z" fill="#fff"/><path d="M12.7 8 A5.4 5.4 0 0 1 3.2 10.7" fill="none" stroke="#fff" stroke-width="2"/><path d="M1.4 13.4 V8.6 H6.2 Z" fill="#fff"/></svg>
<div class="a" style="left:1731px;top:268px;width:135px;height:31px;border-radius:4px;background:#2e7c6b"></div>
<svg style="left:1740px;top:277px" width="14" height="14" viewBox="0 0 14 14"><path d="M7 0.5 V8" stroke="#fff" stroke-width="2.2"/><path d="M3.2 5 L7 9 L10.8 5 Z" fill="#fff"/><path d="M0.5 9.5 H4.5 L7 11.6 L9.5 9.5 H13.5 V13.5 H0.5 Z" fill="#fff"/></svg>
<div class="t " style="left:1757.5px;top:277.35px;font-size:14px;color:#fff;font-weight:bold;transform:scaleX(0.924);transform-origin:0 0">Tải xuống Excel</div>
<div class="a" style="left:317px;top:330px;width:1551px;height:38px;background:#f0f3f7;border-radius:0 6px 0 0"></div>
<div class="a" style="left:317px;top:330.0px;width:1551px;height:1px;background:#dee2e6"></div>
<div class="a" style="left:317px;top:368.0px;width:1551px;height:1px;background:#dee2e6"></div>
<div class="a" style="left:317px;top:417.6px;width:1551px;height:1px;background:#dee2e6"></div>
<div class="a" style="left:317px;top:467.2px;width:1551px;height:1px;background:#dee2e6"></div>
<div class="a" style="left:317px;top:516.8px;width:1551px;height:1px;background:#dee2e6"></div>
<div class="a" style="left:317px;top:566.4px;width:1551px;height:1px;background:#dee2e6"></div>
<div class="a" style="left:317px;top:616.0px;width:1551px;height:1px;background:#dee2e6"></div>
<div class="a" style="left:317px;top:665.6px;width:1551px;height:1px;background:#dee2e6"></div>
<div class="a" style="left:317px;top:715.2px;width:1551px;height:1px;background:#dee2e6"></div>
<div class="a" style="left:317px;top:764.8px;width:1551px;height:1px;background:#dee2e6"></div>
<div class="a" style="left:317px;top:814.4px;width:1551px;height:1px;background:#dee2e6"></div>
<div class="a" style="left:317px;top:864.0px;width:1551px;height:1px;background:#dee2e6"></div>
<div class="a" style="left:317px;top:330px;width:1px;height:535.0px;background:#dee2e6"></div>
<div class="a" style="left:372px;top:330px;width:1px;height:535.0px;background:#dee2e6"></div>
<div class="a" style="left:596px;top:330px;width:1px;height:535.0px;background:#dee2e6"></div>
<div class="a" style="left:685px;top:330px;width:1px;height:535.0px;background:#dee2e6"></div>
<div class="a" style="left:833px;top:330px;width:1px;height:535.0px;background:#dee2e6"></div>
<div class="a" style="left:1054px;top:330px;width:1px;height:535.0px;background:#dee2e6"></div>
<div class="a" style="left:1277px;top:330px;width:1px;height:535.0px;background:#dee2e6"></div>
<div class="a" style="left:1445px;top:330px;width:1px;height:535.0px;background:#dee2e6"></div>
<div class="a" style="left:1789px;top:330px;width:1px;height:535.0px;background:#dee2e6"></div>
<div class="a" style="left:1867px;top:330px;width:1px;height:535.0px;background:#dee2e6"></div>
<div class="a cell hd" style="left:317px;top:330px;width:55px;height:38px;line-height:40.5px">#</div>
<div class="a cell hd" style="left:372px;top:330px;width:224px;height:38px;line-height:40.5px">Họ và tên</div>
<div class="a cell hd" style="left:596px;top:330px;width:89px;height:38px;line-height:40.5px">Giới tính</div>
<div class="a cell hd" style="left:685px;top:330px;width:148px;height:38px;line-height:40.5px">Ngày sinh</div>
<div class="a cell hd" style="left:833px;top:330px;width:221px;height:38px;line-height:40.5px">Tình trạng</div>
<div class="a cell hd" style="left:1054px;top:330px;width:223px;height:38px;line-height:40.5px">Thân phụ</div>
<div class="a cell hd" style="left:1277px;top:330px;width:168px;height:38px;line-height:40.5px">Thân mẫu</div>
<div class="a cell hd" style="left:1445px;top:330px;width:344px;height:38px;line-height:40.5px">Phu thê</div>
<div class="a cell" style="left:317px;top:368.0px;width:55px;height:49.6px;line-height:52.1px">1</div>
<div class="a cell" style="left:382px;top:368.0px;width:224px;height:49.6px;line-height:52.1px;text-align:left">Nguyễn Văn Hưng</div>
<div class="a cell" style="left:596px;top:368.0px;width:89px;height:49.6px;line-height:52.1px">Nam</div>
<div class="a cell" style="left:685px;top:368.0px;width:148px;height:49.6px;line-height:52.1px">01/02/1846</div>
<div class="a cell" style="left:833px;top:368.0px;width:221px;height:49.6px;line-height:52.1px">Mất 23/04/1990</div>
<div class="a cell" style="left:1445px;top:368.0px;width:344px;height:49.6px;line-height:52.1px">Trần Thị Lan</div>
<div class="a" style="left:1812px;top:377.6px;width:33px;height:31px;border-radius:4px;background:#2e7c6b"></div>
<svg style="left:1821.5px;top:385.8px" width="16" height="15" viewBox="0 0 16 15"><path d="M6.3 2.3 H2.3 Q0.8 2.3 0.8 3.8 V11.8 Q0.8 13.3 2.3 13.3 H10.2 Q11.7 13.3 11.7 11.8 V8.4" fill="none" stroke="#fff" stroke-width="1.5" stroke-linecap="round"/><path d="M3.9 10.4 L4.6 7.4 L10.4 1.6 L12.7 3.9 L6.9 9.7 Z" fill="#fff"/><path d="M11.1 0.9 L11.7 0.3 Q12.2 -0.2 12.7 0.3 L14 1.6 Q14.5 2.1 14 2.6 L13.4 3.2 Z" fill="#fff"/></svg>
<div class="a cell" style="left:317px;top:417.6px;width:55px;height:49.6px;line-height:52.1px">2</div>
<div class="a cell" style="left:382px;top:417.6px;width:224px;height:49.6px;line-height:52.1px;text-align:left">Trần Thị Lan</div>
<div class="a cell" style="left:596px;top:417.6px;width:89px;height:49.6px;line-height:52.1px">Nữ</div>
<div class="a cell" style="left:685px;top:417.6px;width:148px;height:49.6px;line-height:52.1px">../../....</div>
<div class="a cell" style="left:833px;top:417.6px;width:221px;height:49.6px;line-height:52.1px">Mất ../../1900</div>
<div class="a cell" style="left:1445px;top:417.6px;width:344px;height:49.6px;line-height:52.1px">Nguyễn Văn Hưng</div>
<div class="a" style="left:1812px;top:427.2px;width:33px;height:31px;border-radius:4px;background:#2e7c6b"></div>
<svg style="left:1821.5px;top:435.40000000000003px" width="16" height="15" viewBox="0 0 16 15"><path d="M6.3 2.3 H2.3 Q0.8 2.3 0.8 3.8 V11.8 Q0.8 13.3 2.3 13.3 H10.2 Q11.7 13.3 11.7 11.8 V8.4" fill="none" stroke="#fff" stroke-width="1.5" stroke-linecap="round"/><path d="M3.9 10.4 L4.6 7.4 L10.4 1.6 L12.7 3.9 L6.9 9.7 Z" fill="#fff"/><path d="M11.1 0.9 L11.7 0.3 Q12.2 -0.2 12.7 0.3 L14 1.6 Q14.5 2.1 14 2.6 L13.4 3.2 Z" fill="#fff"/></svg>
<div class="a cell" style="left:317px;top:467.2px;width:55px;height:49.6px;line-height:52.1px">3</div>
<div class="a cell" style="left:382px;top:467.2px;width:224px;height:49.6px;line-height:52.1px;text-align:left">Nguyễn Văn An</div>
<div class="a cell" style="left:596px;top:467.2px;width:89px;height:49.6px;line-height:52.1px">Nam</div>
<div class="a cell" style="left:685px;top:467.2px;width:148px;height:49.6px;line-height:52.1px">20/04/1885</div>
<div class="a cell" style="left:1054px;top:467.2px;width:223px;height:49.6px;line-height:52.1px">Nguyễn Văn Hưng</div>
<div class="a cell" style="left:1277px;top:467.2px;width:168px;height:49.6px;line-height:52.1px">Trần Thị Lan</div>
<div class="a cell" style="left:1445px;top:467.2px;width:344px;height:49.6px;line-height:52.1px">Phạm Thị Hoa</div>
<div class="a" style="left:1812px;top:476.8px;width:33px;height:31px;border-radius:4px;background:#2e7c6b"></div>
<svg style="left:1821.5px;top:485.0px" width="16" height="15" viewBox="0 0 16 15"><path d="M6.3 2.3 H2.3 Q0.8 2.3 0.8 3.8 V11.8 Q0.8 13.3 2.3 13.3 H10.2 Q11.7 13.3 11.7 11.8 V8.4" fill="none" stroke="#fff" stroke-width="1.5" stroke-linecap="round"/><path d="M3.9 10.4 L4.6 7.4 L10.4 1.6 L12.7 3.9 L6.9 9.7 Z" fill="#fff"/><path d="M11.1 0.9 L11.7 0.3 Q12.2 -0.2 12.7 0.3 L14 1.6 Q14.5 2.1 14 2.6 L13.4 3.2 Z" fill="#fff"/></svg>
<div class="a cell" style="left:317px;top:516.8px;width:55px;height:49.6px;line-height:52.1px">4</div>
<div class="a cell" style="left:382px;top:516.8px;width:224px;height:49.6px;line-height:52.1px;text-align:left">Phạm Thị Hoa</div>
<div class="a cell" style="left:596px;top:516.8px;width:89px;height:49.6px;line-height:52.1px">Nữ</div>
<div class="a cell" style="left:685px;top:516.8px;width:148px;height:49.6px;line-height:52.1px">22/12/1877</div>
<div class="a cell" style="left:833px;top:516.8px;width:221px;height:49.6px;line-height:52.1px">Mất 01/02/1910</div>
<div class="a cell" style="left:1445px;top:516.8px;width:344px;height:49.6px;line-height:52.1px">Nguyễn Văn An</div>
<div class="a" style="left:1812px;top:526.4px;width:33px;height:31px;border-radius:4px;background:#2e7c6b"></div>
<svg style="left:1821.5px;top:534.5999999999999px" width="16" height="15" viewBox="0 0 16 15"><path d="M6.3 2.3 H2.3 Q0.8 2.3 0.8 3.8 V11.8 Q0.8 13.3 2.3 13.3 H10.2 Q11.7 13.3 11.7 11.8 V8.4" fill="none" stroke="#fff" stroke-width="1.5" stroke-linecap="round"/><path d="M3.9 10.4 L4.6 7.4 L10.4 1.6 L12.7 3.9 L6.9 9.7 Z" fill="#fff"/><path d="M11.1 0.9 L11.7 0.3 Q12.2 -0.2 12.7 0.3 L14 1.6 Q14.5 2.1 14 2.6 L13.4 3.2 Z" fill="#fff"/></svg>
<div class="a cell" style="left:317px;top:566.4px;width:55px;height:49.6px;line-height:52.1px">5</div>
<div class="a cell" style="left:382px;top:566.4px;width:224px;height:49.6px;line-height:52.1px;text-align:left">Nguyễn Văn Bảo</div>
<div class="a cell" style="left:596px;top:566.4px;width:89px;height:49.6px;line-height:52.1px">Nam</div>
<div class="a cell" style="left:685px;top:566.4px;width:148px;height:49.6px;line-height:52.1px">10/10/1900</div>
<div class="a cell" style="left:1054px;top:566.4px;width:223px;height:49.6px;line-height:52.1px">Nguyễn Văn An</div>
<div class="a cell" style="left:1277px;top:566.4px;width:168px;height:49.6px;line-height:52.1px">Phạm Thị Hoa</div>
<div class="a cell" style="left:1445px;top:566.4px;width:344px;height:49.6px;line-height:52.1px">Lý Mai Phương, Nguyễn Thị Hai</div>
<div class="a" style="left:1812px;top:576.0px;width:33px;height:31px;border-radius:4px;background:#2e7c6b"></div>
<svg style="left:1821.5px;top:584.1999999999999px" width="16" height="15" viewBox="0 0 16 15"><path d="M6.3 2.3 H2.3 Q0.8 2.3 0.8 3.8 V11.8 Q0.8 13.3 2.3 13.3 H10.2 Q11.7 13.3 11.7 11.8 V8.4" fill="none" stroke="#fff" stroke-width="1.5" stroke-linecap="round"/><path d="M3.9 10.4 L4.6 7.4 L10.4 1.6 L12.7 3.9 L6.9 9.7 Z" fill="#fff"/><path d="M11.1 0.9 L11.7 0.3 Q12.2 -0.2 12.7 0.3 L14 1.6 Q14.5 2.1 14 2.6 L13.4 3.2 Z" fill="#fff"/></svg>
<div class="a cell" style="left:317px;top:616.0px;width:55px;height:49.6px;line-height:52.1px">6</div>
<div class="a cell" style="left:382px;top:616.0px;width:224px;height:49.6px;line-height:52.1px;text-align:left">Nguyễn Thị Mai</div>
<div class="a cell" style="left:596px;top:616.0px;width:89px;height:49.6px;line-height:52.1px">Nữ</div>
<div class="a cell" style="left:685px;top:616.0px;width:148px;height:49.6px;line-height:52.1px">05/07/1905</div>
<div class="a cell" style="left:1054px;top:616.0px;width:223px;height:49.6px;line-height:52.1px">Nguyễn Văn An</div>
<div class="a cell" style="left:1277px;top:616.0px;width:168px;height:49.6px;line-height:52.1px">Phạm Thị Hoa</div>
<div class="a cell" style="left:1445px;top:616.0px;width:344px;height:49.6px;line-height:52.1px">Phan Phước</div>
<div class="a" style="left:1812px;top:625.6px;width:33px;height:31px;border-radius:4px;background:#2e7c6b"></div>
<svg style="left:1821.5px;top:633.8px" width="16" height="15" viewBox="0 0 16 15"><path d="M6.3 2.3 H2.3 Q0.8 2.3 0.8 3.8 V11.8 Q0.8 13.3 2.3 13.3 H10.2 Q11.7 13.3 11.7 11.8 V8.4" fill="none" stroke="#fff" stroke-width="1.5" stroke-linecap="round"/><path d="M3.9 10.4 L4.6 7.4 L10.4 1.6 L12.7 3.9 L6.9 9.7 Z" fill="#fff"/><path d="M11.1 0.9 L11.7 0.3 Q12.2 -0.2 12.7 0.3 L14 1.6 Q14.5 2.1 14 2.6 L13.4 3.2 Z" fill="#fff"/></svg>
<div class="a cell" style="left:317px;top:665.6px;width:55px;height:49.6px;line-height:52.1px">7</div>
<div class="a cell" style="left:382px;top:665.6px;width:224px;height:49.6px;line-height:52.1px;text-align:left">Nguyễn Văn Hoàng</div>
<div class="a cell" style="left:596px;top:665.6px;width:89px;height:49.6px;line-height:52.1px">Nam</div>
<div class="a cell" style="left:685px;top:665.6px;width:148px;height:49.6px;line-height:52.1px">05/06/1880</div>
<div class="a cell" style="left:833px;top:665.6px;width:221px;height:49.6px;line-height:52.1px">Mất 19/02/1945 AL</div>
<div class="a cell" style="left:1054px;top:665.6px;width:223px;height:49.6px;line-height:52.1px">Nguyễn Văn Hưng</div>
<div class="a cell" style="left:1277px;top:665.6px;width:168px;height:49.6px;line-height:52.1px">Trần Thị Lan</div>
<div class="a cell" style="left:1445px;top:665.6px;width:344px;height:49.6px;line-height:52.1px">Đỗ Thị Minh</div>
<div class="a" style="left:1812px;top:675.2px;width:33px;height:31px;border-radius:4px;background:#2e7c6b"></div>
<svg style="left:1821.5px;top:683.4px" width="16" height="15" viewBox="0 0 16 15"><path d="M6.3 2.3 H2.3 Q0.8 2.3 0.8 3.8 V11.8 Q0.8 13.3 2.3 13.3 H10.2 Q11.7 13.3 11.7 11.8 V8.4" fill="none" stroke="#fff" stroke-width="1.5" stroke-linecap="round"/><path d="M3.9 10.4 L4.6 7.4 L10.4 1.6 L12.7 3.9 L6.9 9.7 Z" fill="#fff"/><path d="M11.1 0.9 L11.7 0.3 Q12.2 -0.2 12.7 0.3 L14 1.6 Q14.5 2.1 14 2.6 L13.4 3.2 Z" fill="#fff"/></svg>
<div class="a cell" style="left:317px;top:715.2px;width:55px;height:49.6px;line-height:52.1px">8</div>
<div class="a cell" style="left:382px;top:715.2px;width:224px;height:49.6px;line-height:52.1px;text-align:left">Đỗ Thị Minh</div>
<div class="a cell" style="left:596px;top:715.2px;width:89px;height:49.6px;line-height:52.1px">Nữ</div>
<div class="a cell" style="left:685px;top:715.2px;width:148px;height:49.6px;line-height:52.1px">14/08/1882</div>
<div class="a cell" style="left:1445px;top:715.2px;width:344px;height:49.6px;line-height:52.1px">Nguyễn Văn Hoàng</div>
<div class="a" style="left:1812px;top:724.8px;width:33px;height:31px;border-radius:4px;background:#2e7c6b"></div>
<svg style="left:1821.5px;top:733.0px" width="16" height="15" viewBox="0 0 16 15"><path d="M6.3 2.3 H2.3 Q0.8 2.3 0.8 3.8 V11.8 Q0.8 13.3 2.3 13.3 H10.2 Q11.7 13.3 11.7 11.8 V8.4" fill="none" stroke="#fff" stroke-width="1.5" stroke-linecap="round"/><path d="M3.9 10.4 L4.6 7.4 L10.4 1.6 L12.7 3.9 L6.9 9.7 Z" fill="#fff"/><path d="M11.1 0.9 L11.7 0.3 Q12.2 -0.2 12.7 0.3 L14 1.6 Q14.5 2.1 14 2.6 L13.4 3.2 Z" fill="#fff"/></svg>
<div class="a cell" style="left:317px;top:764.8px;width:55px;height:49.6px;line-height:52.1px">9</div>
<div class="a cell" style="left:382px;top:764.8px;width:224px;height:49.6px;line-height:52.1px;text-align:left">Nguyễn Văn Khôi</div>
<div class="a cell" style="left:596px;top:764.8px;width:89px;height:49.6px;line-height:52.1px">Nam</div>
<div class="a cell" style="left:685px;top:764.8px;width:148px;height:49.6px;line-height:52.1px">22/02/1914</div>
<div class="a cell" style="left:1054px;top:764.8px;width:223px;height:49.6px;line-height:52.1px">Nguyễn Văn Hoàng</div>
<div class="a cell" style="left:1277px;top:764.8px;width:168px;height:49.6px;line-height:52.1px">Đỗ Thị Minh</div>
<div class="a cell" style="left:1445px;top:764.8px;width:344px;height:49.6px;line-height:52.1px">Lê Thị Thùy Trinh</div>
<div class="a" style="left:1812px;top:774.4px;width:33px;height:31px;border-radius:4px;background:#2e7c6b"></div>
<svg style="left:1821.5px;top:782.5999999999999px" width="16" height="15" viewBox="0 0 16 15"><path d="M6.3 2.3 H2.3 Q0.8 2.3 0.8 3.8 V11.8 Q0.8 13.3 2.3 13.3 H10.2 Q11.7 13.3 11.7 11.8 V8.4" fill="none" stroke="#fff" stroke-width="1.5" stroke-linecap="round"/><path d="M3.9 10.4 L4.6 7.4 L10.4 1.6 L12.7 3.9 L6.9 9.7 Z" fill="#fff"/><path d="M11.1 0.9 L11.7 0.3 Q12.2 -0.2 12.7 0.3 L14 1.6 Q14.5 2.1 14 2.6 L13.4 3.2 Z" fill="#fff"/></svg>
<div class="a cell" style="left:317px;top:814.4px;width:55px;height:49.6px;line-height:52.1px">10</div>
<div class="a cell" style="left:382px;top:814.4px;width:224px;height:49.6px;line-height:52.1px;text-align:left">Lý Mai Phương</div>
<div class="a cell" style="left:596px;top:814.4px;width:89px;height:49.6px;line-height:52.1px">Nữ</div>
<div class="a cell" style="left:685px;top:814.4px;width:148px;height:49.6px;line-height:52.1px">12/06/1901</div>
<div class="a cell" style="left:1445px;top:814.4px;width:344px;height:49.6px;line-height:52.1px">Nguyễn Văn Bảo</div>
<div class="a" style="left:1812px;top:824.0px;width:33px;height:31px;border-radius:4px;background:#2e7c6b"></div>
<svg style="left:1821.5px;top:832.2px" width="16" height="15" viewBox="0 0 16 15"><path d="M6.3 2.3 H2.3 Q0.8 2.3 0.8 3.8 V11.8 Q0.8 13.3 2.3 13.3 H10.2 Q11.7 13.3 11.7 11.8 V8.4" fill="none" stroke="#fff" stroke-width="1.5" stroke-linecap="round"/><path d="M3.9 10.4 L4.6 7.4 L10.4 1.6 L12.7 3.9 L6.9 9.7 Z" fill="#fff"/><path d="M11.1 0.9 L11.7 0.3 Q12.2 -0.2 12.7 0.3 L14 1.6 Q14.5 2.1 14 2.6 L13.4 3.2 Z" fill="#fff"/></svg>
<div class="t " style="left:318.2px;top:911.10px;font-size:15px;color:#4a5866;letter-spacing:0.43px">Hiển thị từ 1-10/66 bản ghi</div>
<div class="a" style="left:1684px;top:907px;width:183px;height:28px;border:1px solid #dee2e6;border-radius:4px;background:#fff"></div>
<div class="a cell" style="left:1684px;top:907px;width:25px;height:28px;line-height:29px;font-size:11px;color:#3d5468">«</div>
<div class="a" style="left:1709px;top:907px;width:25px;height:28px;background:#2e7c6b"></div>
<div class="a cell" style="left:1709px;top:907px;width:25px;height:28px;line-height:29px;font-size:14px;color:#fff">1</div>
<div class="a" style="left:1734px;top:907px;width:1px;height:28px;background:#dee2e6"></div>
<div class="a cell" style="left:1734px;top:907px;width:26px;height:28px;line-height:29px;font-size:14px;color:#3d5468">2</div>
<div class="a" style="left:1760px;top:907px;width:1px;height:28px;background:#dee2e6"></div>
<div class="a cell" style="left:1760px;top:907px;width:27px;height:28px;line-height:29px;font-size:14px;color:#3d5468">3</div>
<div class="a" style="left:1787px;top:907px;width:1px;height:28px;background:#dee2e6"></div>
<div class="a cell" style="left:1787px;top:907px;width:27px;height:28px;line-height:29px;font-size:14px;color:#3d5468">4</div>
<div class="a" style="left:1814px;top:907px;width:1px;height:28px;background:#dee2e6"></div>
<div class="a cell" style="left:1814px;top:907px;width:26px;height:28px;line-height:29px;font-size:14px;color:#3d5468">5</div>
<div class="a" style="left:1840px;top:907px;width:1px;height:28px;background:#dee2e6"></div>
<div class="a cell" style="left:1840px;top:907px;width:27px;height:28px;line-height:29px;font-size:11px;color:#3d5468">»</div>
<div class="a" style="left:296px;top:978px;width:122px;height:31px;border-radius:4px;background:#4a5568"></div>
<svg style="left:305.5px;top:987.5px" width="13" height="11" viewBox="0 0 13 11"><path d="M0.3 5.5 L5.5 0.4 V3.4 H12.7 V7.6 H5.5 V10.6 Z" fill="#fff"/></svg>
<div class="t " style="left:323px;top:985.92px;font-size:13.8px;color:#fff;font-weight:bold;transform:scaleX(0.95);transform-origin:0 0">Về danh sách</div>
<div class="a" style="left:1800.5px;top:872px;width:65px;height:65px;border-radius:50%;background:#fff;border:1px solid #b8b8b8;box-shadow:0 3px 8px rgba(0,0,0,0.25)"></div>
<svg style="left:1813px;top:887px" width="40" height="36" viewBox="0 0 40 36"><path d="M33.4 19.5 A14 14 0 1 0 19.9 29.9" fill="none" stroke="#1d4f8c" stroke-width="2.2"/><rect x="1.1" y="12.6" width="4.8" height="9.2" rx="2" fill="#1d4f8c"/><rect x="34" y="12.6" width="4.8" height="9.2" rx="2" fill="#1d4f8c"/><circle cx="20.2" cy="30.1" r="1.9" fill="#1d4f8c"/><circle cx="19.9" cy="16.7" r="11.1" fill="#1b93d6"/><path d="M25 25 L31 27.8 L28.5 21 Z" fill="#1b93d6"/><circle cx="14.8" cy="17" r="2" fill="#fff"/><circle cx="19.9" cy="17" r="2" fill="#fff"/><circle cx="25.1" cy="17" r="2" fill="#fff"/></svg>
<div class="a" style="left:276px;top:87px;width:14px;height:942px;background:linear-gradient(90deg,rgba(0,0,0,0.07),rgba(0,0,0,0.02) 45%,rgba(0,0,0,0))"></div>
<div class="a" style="left:1910px;top:87px;width:10px;height:942px;background:#f9f9f9"></div>
<svg style="left:1910px;top:87px" width="10" height="10"><path d="M2 7 L5 3.5 L8 7 Z" fill="#a3a3a3"/></svg>
<svg style="left:1910px;top:1019px" width="10" height="10"><path d="M2 4 L5 7.5 L8 4 Z" fill="#a3a3a3"/></svg>
<div class="a" style="left:1912px;top:99px;width:6px;height:856px;border-radius:3px;background:#c1c1c1"></div>
</body></html>
